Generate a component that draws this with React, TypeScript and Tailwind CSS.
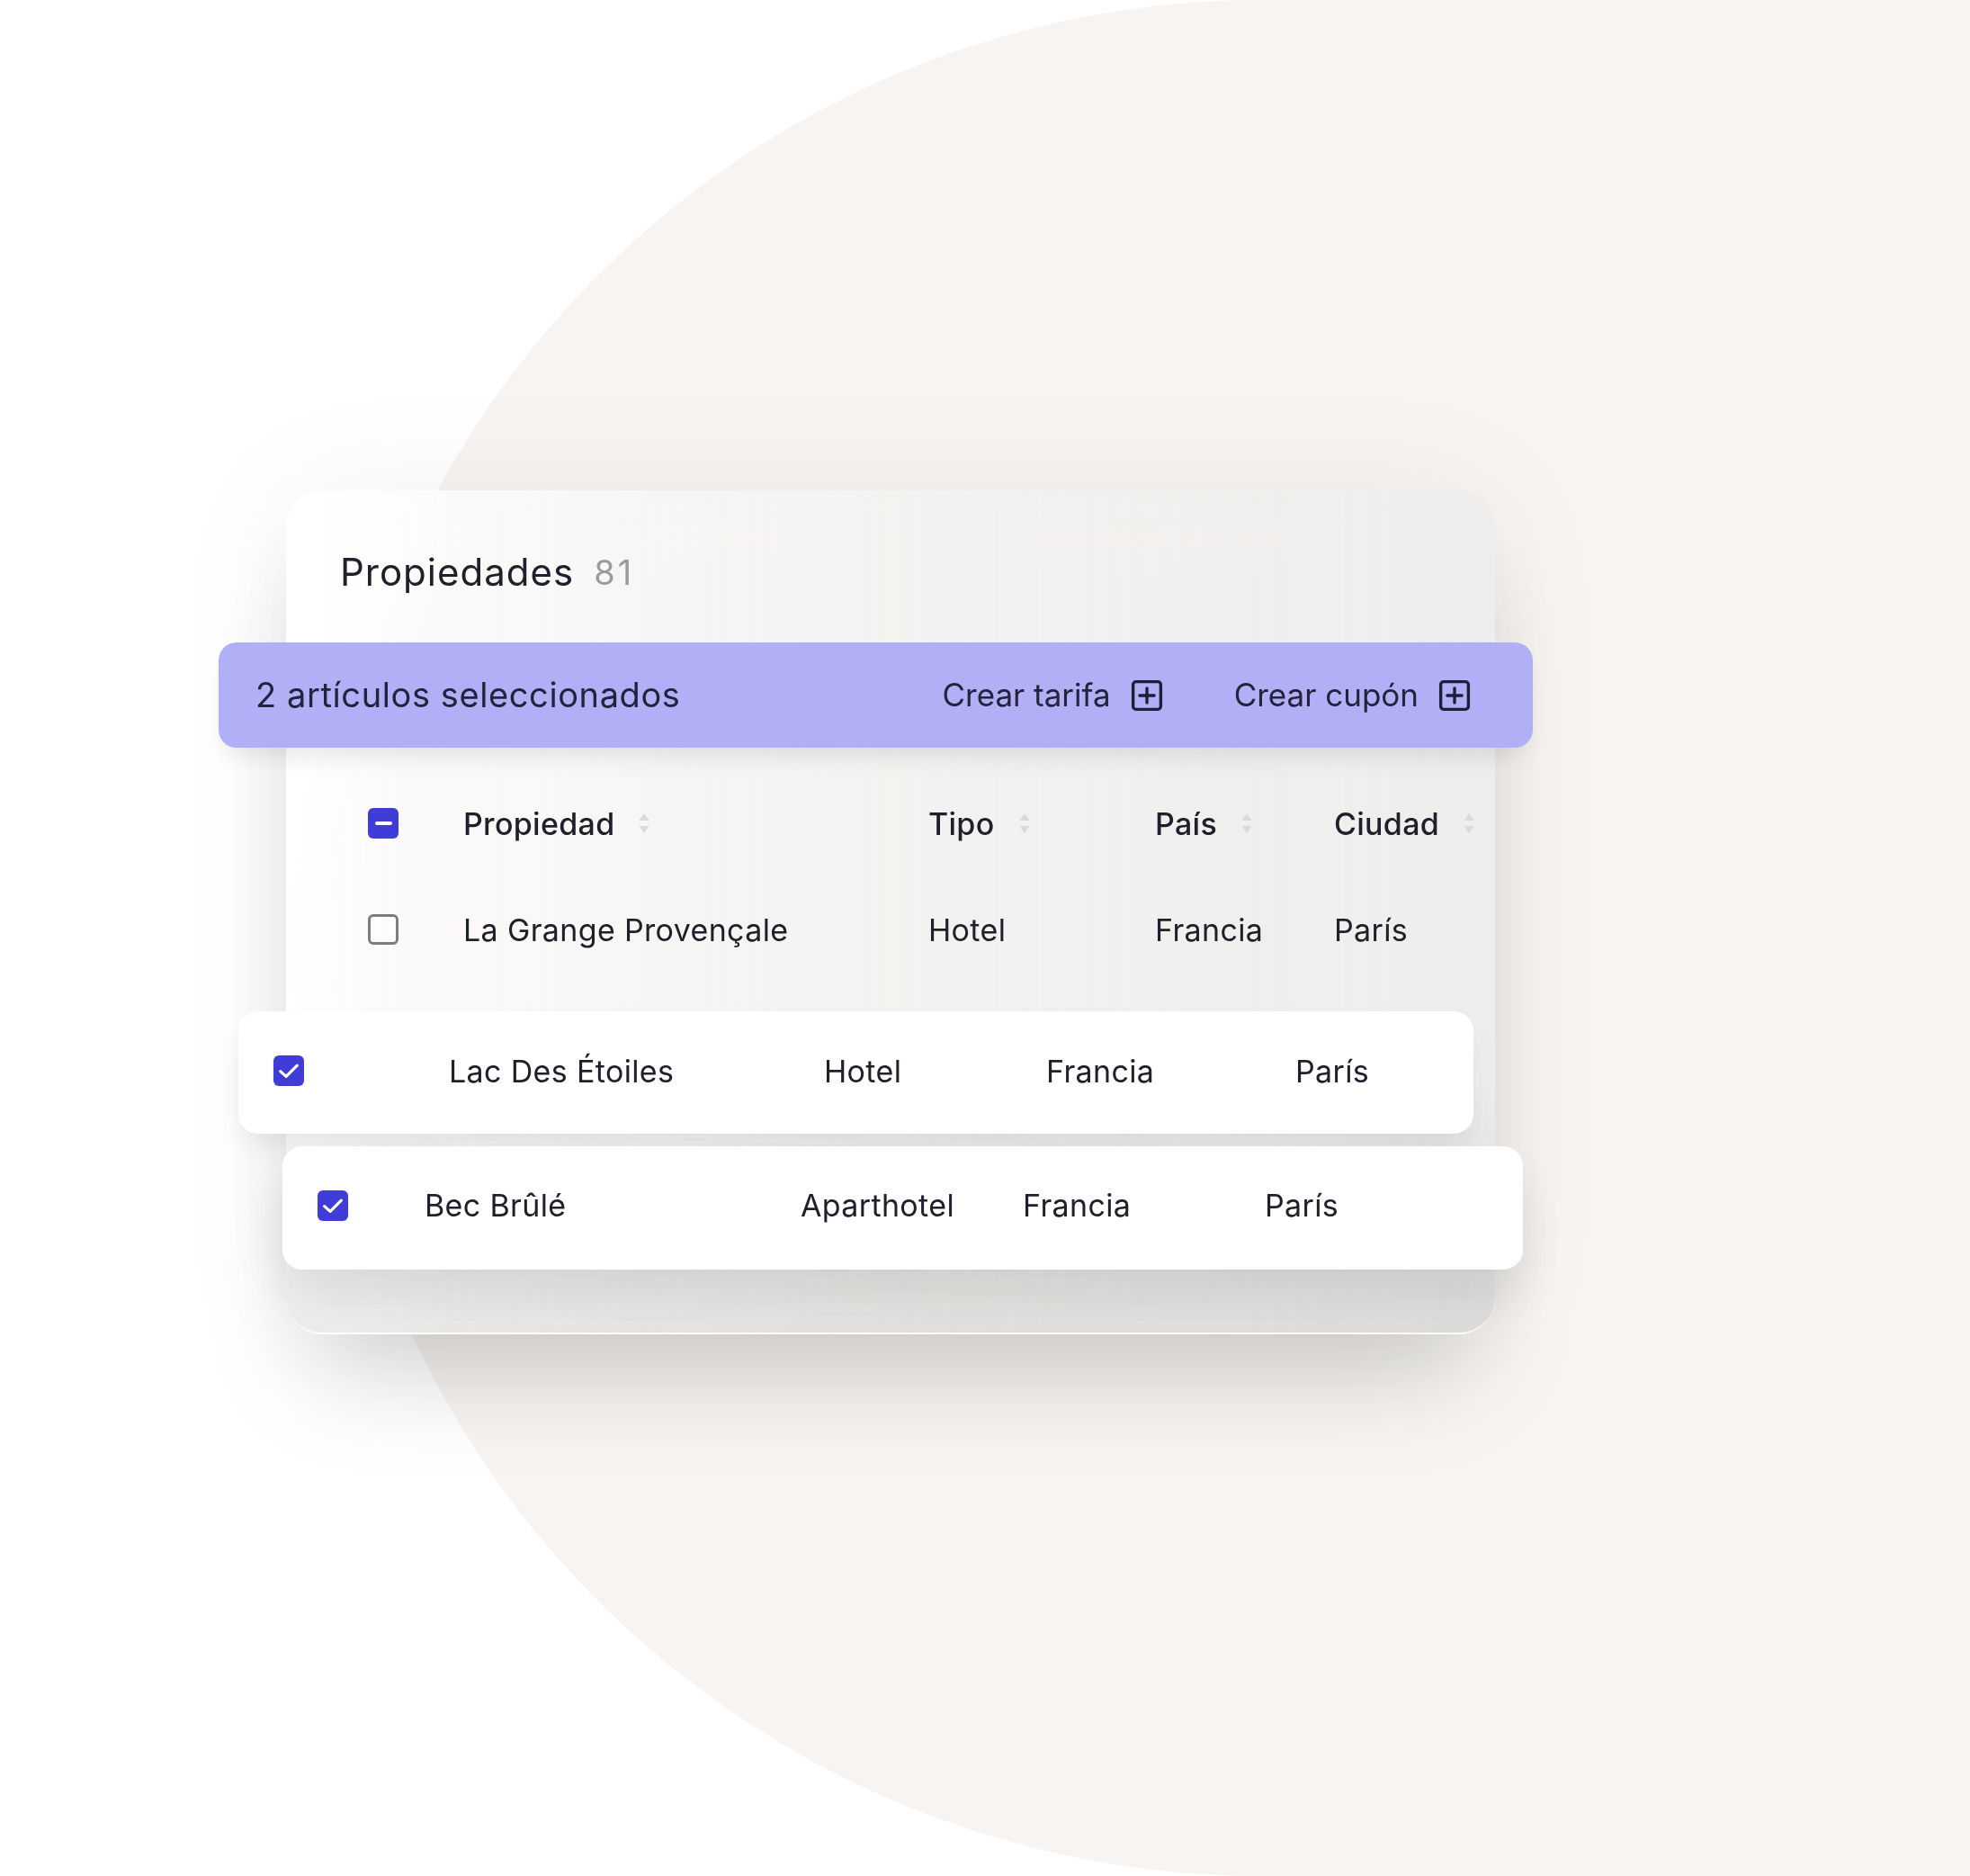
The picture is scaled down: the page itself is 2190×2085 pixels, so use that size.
import React from "react";

function SortIcon() {
  return (
    <svg width="14" height="28" viewBox="0 0 14 28" className="shrink-0">
      <path d="M7 3 L12.5 11 L1.5 11 Z" fill="#dadadd" />
      <path d="M1.5 17 L12.5 17 L7 25 Z" fill="#dadadd" />
    </svg>
  );
}

function PlusSquare() {
  return (
    <svg width="36" height="36" viewBox="0 0 24 24" fill="none" stroke="#1f1d3a" strokeWidth="2.25" strokeLinecap="round" strokeLinejoin="round" className="shrink-0">
      <rect x="1.75" y="1.75" width="20.5" height="20.5" rx="2.2" />
      <path d="M6.6 12h10.8" />
      <path d="M12 6.6v10.8" />
    </svg>
  );
}

function Checkbox({ state }: { state: "checked" | "unchecked" | "indeterminate" }) {
  if (state === "unchecked") {
    return <div className="w-[34px] h-[34px] rounded-[6px] border-[3px] border-[#7c7c82] bg-white/40" />;
  }
  return (
    <div className="w-[34px] h-[34px] rounded-[6px] bg-[#3f3cd8] flex items-center justify-center">
      {state === "checked" ? (
        <svg width="28" height="28" viewBox="0 0 24 24" fill="none" stroke="white" strokeWidth="2.75" strokeLinecap="round" strokeLinejoin="round">
          <path d="M4 12.5L9.5 17.5L20 7" />
        </svg>
      ) : (
        <div className="w-[19px] h-[4px] rounded-full bg-white" />
      )}
    </div>
  );
}

export default function App() {
  return (
    <div className="relative w-[2190px] h-[2085px] overflow-hidden bg-white font-['Inter','Noto_Sans',sans-serif] text-[#20202d]">
      <div className="absolute left-[360px] top-0 w-[3200px] h-[2085px] rounded-full bg-[#f7f4f1]" />
      <div className="relative pt-[545px] pl-[318px]">
        <div className="w-[1344px] h-[938px] rounded-[40px] border-b-[2px] border-white/70 bg-[linear-gradient(180deg,rgba(0,0,0,0)_70%,rgba(0,0,0,0.07)_100%),linear-gradient(90deg,rgba(255,255,255,0.75)_0%,rgba(242,241,240,0.6)_50%,rgba(235,234,233,0.7)_100%)] backdrop-blur-[40px] shadow-[0_70px_120px_-30px_rgba(0,0,0,0.17),0_0_140px_rgba(0,0,0,0.06)] flex flex-col">
          {/* title */}
          <div className="pt-[64px] pl-[60px] h-[118px] flex items-center gap-[22px]">
            <span className="text-[42px] leading-[54px] tracking-[1px]">Propiedades</span>
            <span className="text-[38px] leading-[54px] text-[#9b9b9e] tracking-[3px]">81</span>
          </div>
          {/* selection bar */}
          <div className="mt-[51px] -ml-[75px] w-[1461px] h-[117px] rounded-[20px] bg-[#b1b0f7] shadow-[0_16px_30px_-10px_rgba(0,0,0,0.12)] flex items-center pl-[41px] pr-[69px]">
            <span className="text-[38px] tracking-[0.6px] text-[#24233c]">2 artículos seleccionados</span>
            <div className="ml-auto flex items-center gap-[22px]">
              <span className="text-[35px] text-[#24233c]">Crear tarifa</span>
              <PlusSquare />
            </div>
            <div className="ml-[79px] flex items-center gap-[22px]">
              <span className="text-[35px] text-[#24233c]">Crear cupón</span>
              <PlusSquare />
            </div>
          </div>
          {/* header */}
          <div className="mt-[42px] h-[84px] pl-[91px] grid grid-cols-[106px_517px_252px_199px_1fr] items-center text-[34px] tracking-[0.3px] font-medium">
            <Checkbox state="indeterminate" />
            <div className="flex items-center gap-[26px]"><span>Propiedad</span><SortIcon /></div>
            <div className="flex items-center gap-[26px]"><span>Tipo</span><SortIcon /></div>
            <div className="flex items-center gap-[26px]"><span>País</span><SortIcon /></div>
            <div className="flex items-center gap-[26px]"><span>Ciudad</span><SortIcon /></div>
          </div>
          {/* row 1 */}
          <div className="h-[152px] pl-[91px] grid grid-cols-[106px_517px_252px_199px_1fr] items-center text-[34px] tracking-[0.35px]">
            <Checkbox state="unchecked" />
            <span>La Grange Provençale</span>
            <span>Hotel</span>
            <span>Francia</span>
            <span>París</span>
          </div>
          {/* floating row 1 */}
          <div className="mt-[15px] -ml-[53px] w-[1373px] h-[136px] shrink-0 rounded-[22px] bg-white shadow-[0_18px_36px_-8px_rgba(0,0,0,0.10)] pl-[39px] pb-[4px] grid grid-cols-[195px_417px_247px_277px_1fr] items-center text-[34px] tracking-[0.35px]">
            <Checkbox state="checked" />
            <span>Lac Des Étoiles</span>
            <span>Hotel</span>
            <span>Francia</span>
            <span>París</span>
          </div>
          {/* floating row 2 */}
          <div className="mt-[14px] -ml-[4px] w-[1379px] h-[137px] shrink-0 rounded-[22px] bg-white shadow-[0_30px_60px_-4px_rgba(0,0,0,0.11)] pl-[39px] pb-[6px] grid grid-cols-[119px_418px_247px_269px_1fr] items-center text-[34px] tracking-[0.35px]">
            <Checkbox state="checked" />
            <span>Bec Brûlé</span>
            <span>Aparthotel</span>
            <span>Francia</span>
            <span>París</span>
          </div>
        </div>
      </div>
    </div>
  );
}
